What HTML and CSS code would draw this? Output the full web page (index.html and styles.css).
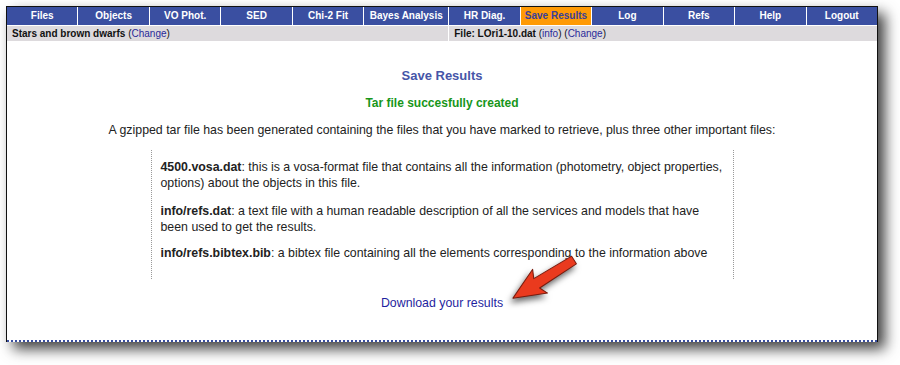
FILE: index.html
```html
<!DOCTYPE html>
<html lang="en">
<head>
	<meta charset="UTF-8">
	<title>Save Results</title>
	<link rel="stylesheet" href="styles.css">
</head>
<body>
	<div class="window">
		<div class="menu">
			<a class="tab" href="#">Files</a>
			<a class="tab" href="#">Objects</a>
			<a class="tab" href="#">VO Phot.</a>
			<a class="tab" href="#">SED</a>
			<a class="tab" href="#">Chi-2 Fit</a>
			<a class="tab" href="#">Bayes Analysis</a>
			<a class="tab" href="#">HR Diag.</a>
			<a class="tab current" href="#">Save Results</a>
			<a class="tab" href="#">Log</a>
			<a class="tab" href="#">Refs</a>
			<a class="tab" href="#">Help</a>
			<a class="tab" href="#">Logout</a>
			<div class="info info-left"><b>Stars and brown dwarfs</b> (<a href="#">Change</a>)</div>
			<div class="info info-right"><b>File: LOri1-10.dat</b> (<a href="#">info</a>) (<a href="#">Change</a>)</div>
		</div>

		<div class="content">
			<h2 class="title">Save Results</h2>
			<p class="ok">Tar file succesfully created</p>
			<p class="intro">A gzipped tar file has been generated containing the files that you have marked to retrieve, plus three other important files:</p>

			<div class="files">
				<p><b>4500.vosa.dat</b>: this is a vosa-format file that contains all the information (photometry, object properties, options) about the objects in this file.</p>
				<p><b>info/refs.dat</b>: a text file with a human readable description of all the services and models that have been used to get the results.</p>
				<p><b>info/refs.bibtex.bib</b>: a bibtex file containing all the elements corresponding to the information above</p>
			</div>

			<p class="download"><a href="#">Download your results</a></p>

			<!-- flecha roja que apunta al enlace -->
			<svg class="arrow" width="80" height="60" viewBox="0 0 80 60">
				<polygon transform="translate(69 10) rotate(148)" points="0,-4.5 44,-5.5 40,-14 72,0 40,14 44,5.5 0,4.5" fill="#ea3a1e" stroke="#7a1a0c" stroke-width="1" stroke-linejoin="round"/>
			</svg>
		</div>
	</div>
</body>
</html>
```

FILE: styles.css
```css
*{margin:0;padding:0}
html{min-height:100%}
body{
	background:#fff;
	font-family:"Liberation Sans", Arial, sans-serif;
	font-size:12.35px;
	color:#222;
	padding-bottom:24px;
}
a{text-decoration:none}

.window{
	width:870px;
	margin:6px 0 0 6px;
	border:1px solid #111;
	border-bottom:none;
	background:#fff;
	box-shadow:7px 7px 13px rgba(0,0,0,0.75);
}

/* menu de arriba */
.menu{
	display:grid;
	grid-template-columns:repeat(5, 1fr) 84px repeat(6, 1fr);
	grid-template-rows:18px 15px;
	gap:1px;
	background:#fff;
}
.tab{
	background:#3a4fa1;
	color:#fff;
	font-size:10px;
	font-weight:bold;
	line-height:18px;
	text-align:center;
	white-space:nowrap;
}
.tab.current{
	background:#ff9a05;
	color:#3a3f9a;
}
.info{
	background:#dddadd;
	font-size:10px;
	line-height:15px;
	padding-left:5px;
	color:#111;
	white-space:nowrap;
}
.info a{color:#2a2a9a}
.info-left{grid-column:1 / 7}
.info-right{grid-column:7 / 13}

/* contenido */
.content{
	position:relative;
	padding:27px 0 29px;
	text-align:center;
	border-bottom:2px dotted #3a4fa1;
}
.title{
	font-size:13px;
	line-height:16px;
	color:#4655a8;
}
.ok{
	margin-top:11px;
	font-size:12px;
	font-weight:bold;
	line-height:16px;
	color:#17961a;
}
.intro{
	margin-top:11px;
	line-height:16px;
}
.files{
	width:563px;
	margin:12px auto 0;
	padding:9px 9px 6px;
	border-left:1px dotted #999;
	border-right:1px dotted #999;
	text-align:left;
}
.files p{
	line-height:16px;
	margin-bottom:12px;
}
.files p:nth-child(3){margin-top:-2px}
.download{
	margin-top:16px;
	line-height:16px;
}
.download a{color:#1f1fa0}

.arrow{
	position:absolute;
	left:498px;
	top:209px;
	filter:drop-shadow(-2px 4px 3px rgba(0,0,0,0.6));
}
```
